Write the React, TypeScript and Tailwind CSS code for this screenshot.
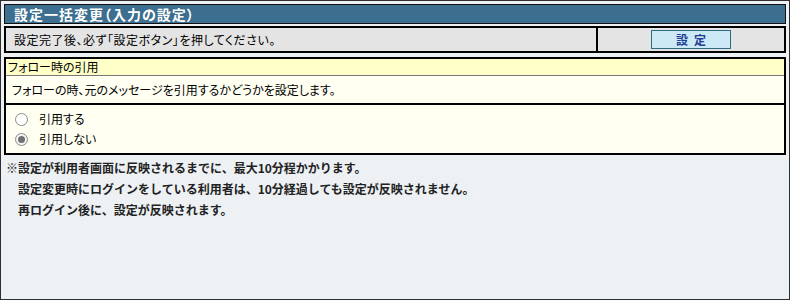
import React from "react";

const font = {
  fontFamily: '"Noto Sans CJK JP", "Noto Sans", sans-serif',
};
const palt = { fontFeatureSettings: '"palt"' };

export default function App() {
  return (
    <div
      className="w-[790px] h-[300px] border border-[#2e2e2e] bg-[#edf1f4] px-[3px] pt-[3px] text-black"
      style={font}
    >
      <div
        className="h-[20px] border border-[#111] bg-[#3c6e8f] flex items-center pl-[9px] text-white font-bold text-[14px] leading-none tracking-[1px]"
        style={palt}
      >
        設定一括変更（入力の設定）
      </div>
      <div className="mt-[2px] h-[27px] flex border-2 border-black bg-[#e4e4e4] text-[12px]">
        <div className="flex-1 flex items-center pl-[8px] border-r-2 border-black tracking-[0.5px]" style={palt}>
          設定完了後、必ず「設定ボタン」を押してください。
        </div>
        <div className="w-[186px] flex items-center justify-center">
          <button className="w-[80px] h-[19px] bg-[#cde9f6] border border-[#2f6b87] text-[#1f3f94] font-bold text-[12px] tracking-[6px] pl-[6px] leading-none flex items-center justify-center">
            設定
          </button>
        </div>
      </div>
      <div className="mt-[4px] border-2 border-black bg-[#fffff2] text-[12px]" style={palt}>
        <div className="h-[17px] bg-[#ffffc8] border-b border-[#777] flex items-center pl-[2px] leading-none">
          フォロー時の引用
        </div>
        <div className="h-[29px] flex items-center pl-[6px] border-b-2 border-black">
          フォローの時、元のメッセージを引用するかどうかを設定します。
        </div>
        <div className="pt-[4px] pb-[4px] pl-[9px]">
          <label className="flex items-center h-[20px] gap-[11px]">
            <span className="w-[13px] h-[13px] rounded-full border border-[#8a8a8a] bg-white" />
            <span>引用する</span>
          </label>
          <label className="flex items-center h-[20px] gap-[11px]">
            <span className="w-[13px] h-[13px] rounded-full border border-[#8a8a8a] bg-[#f4f4f4] flex items-center justify-center">
              <span className="w-[7px] h-[7px] rounded-full bg-[#707070]" />
            </span>
            <span>引用しない</span>
          </label>
        </div>
      </div>
      <div className="mt-[2px] pl-[2px] text-[12px] font-bold text-[#222] leading-[21px]">
        <div>※設定が利用者画面に反映されるまでに、最大10分程かかります。</div>
        <div className="pl-[12px]">設定変更時にログインをしている利用者は、10分経過しても設定が反映されません。</div>
        <div className="pl-[12px]">再ログイン後に、設定が反映されます。</div>
      </div>
    </div>
  );
}
